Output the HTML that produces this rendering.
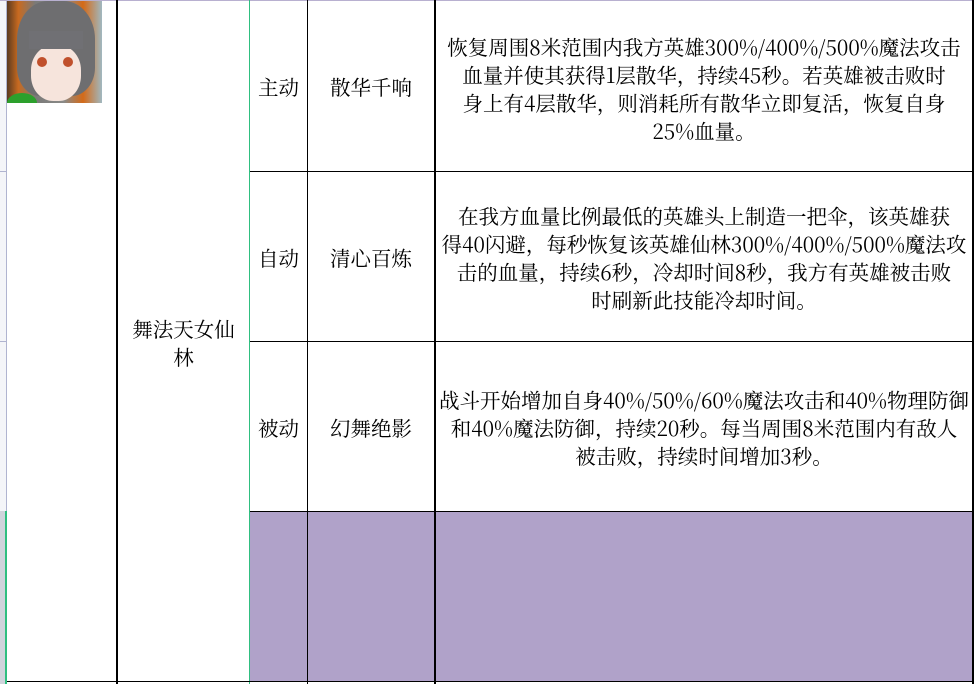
<!DOCTYPE html>
<html><head><meta charset="utf-8"><style>
html,body{margin:0;padding:0;width:974px;height:684px;overflow:hidden;background:#fff;font-family:"Noto Serif CJK SC","Liberation Serif",serif;color:#000;}
.a{position:absolute;}
.t{position:absolute;display:flex;align-items:center;justify-content:center;text-align:center;font-size:20.5px;line-height:28px;white-space:nowrap;}
</style></head><body>
<div class="a" style="left:0;top:0;width:6px;height:684px;background:#f4f5f8;"></div>
<div class="a" style="left:0;top:511px;width:6px;height:173px;background:#d0d4dc;"></div>
<div class="a" style="left:0;top:171px;width:6px;height:1px;background:#b0b4d0;"></div>
<div class="a" style="left:0;top:341px;width:6px;height:1px;background:#b0b4d0;"></div>
<div class="a" style="left:6px;top:0;width:1px;height:511px;background:#b0b4d0;"></div>
<div class="a" style="left:5px;top:511px;width:2px;height:173px;background:#2fbf80;"></div>
<div class="a" style="left:0;top:0;width:974px;height:1px;background:#b8b0d0;"></div>
<div class="a" style="left:7px;top:1px;width:95px;height:102px;background:linear-gradient(90deg,#5a3a20 0%,#c86a20 12%,#7a7a78 30%,#8a8a88 60%,#d46a18 80%,#a0b8c0 100%);overflow:hidden;">
<div class="a" style="left:10px;top:0px;width:78px;height:95px;border-radius:40% 40% 30% 30%;background:#6e6e70;"></div>
<div class="a" style="left:24px;top:44px;width:50px;height:56px;border-radius:45%;background:#f6e4dc;"></div>
<div class="a" style="left:22px;top:30px;width:54px;height:18px;background:#707074;"></div>
<div class="a" style="left:30px;top:56px;width:10px;height:10px;border-radius:50%;background:#c0502c;"></div>
<div class="a" style="left:56px;top:56px;width:10px;height:10px;border-radius:50%;background:#c0502c;"></div>
<div class="a" style="left:0;top:92px;width:30px;height:20px;border-radius:50%;background:#2ca02c;"></div>
</div>
<div class="a" style="left:116px;top:0;width:2px;height:684px;background:#000;"></div>
<div class="a" style="left:249px;top:0;width:1px;height:684px;background:#2fbf80;"></div>
<div class="a" style="left:250px;top:511px;width:724px;height:170px;background:#b0a2c9;"></div>
<div class="a" style="left:307px;top:0;width:1px;height:684px;background:#000;"></div>
<div class="a" style="left:434px;top:0;width:2px;height:684px;background:#000;"></div>
<div class="a" style="left:250px;top:171px;width:724px;height:1px;background:#000;"></div>
<div class="a" style="left:250px;top:341px;width:724px;height:1px;background:#000;"></div>
<div class="a" style="left:250px;top:511px;width:724px;height:1px;background:#000;"></div>
<div class="a" style="left:7px;top:681px;width:967px;height:1px;background:#000;"></div>
<div class="a" style="left:972px;top:0;width:2px;height:684px;background:#000;"></div>

<div class="t" style="left:118px;top:0;width:131px;height:684px;">舞法天女仙<br>林</div>
<div class="t" style="left:250px;top:0;width:57px;height:171px;">主动</div>
<div class="t" style="left:308px;top:0;width:126px;height:171px;">散华千响</div>
<div class="t" style="left:436px;top:2px;width:536px;height:171px;">恢复周围8米范围内我方英雄300%/400%/500%魔法攻击<br>血量并使其获得1层散华，持续45秒。若英雄被击败时<br>身上有4层散华，则消耗所有散华立即复活，恢复自身<br>25%血量。</div>
<div class="t" style="left:250px;top:172px;width:57px;height:169px;">自动</div>
<div class="t" style="left:308px;top:172px;width:126px;height:169px;">清心百炼</div>
<div class="t" style="left:436px;top:172px;width:536px;height:169px;">在我方血量比例最低的英雄头上制造一把伞，该英雄获<br>得40闪避，每秒恢复该英雄仙林300%/400%/500%魔法攻<br>击的血量，持续6秒，冷却时间8秒，我方有英雄被击败<br>时刷新此技能冷却时间。</div>
<div class="t" style="left:250px;top:342px;width:57px;height:169px;">被动</div>
<div class="t" style="left:308px;top:342px;width:126px;height:169px;">幻舞绝影</div>
<div class="t" style="left:436px;top:342px;width:536px;height:169px;">战斗开始增加自身40%/50%/60%魔法攻击和40%物理防御<br>和40%魔法防御，持续20秒。每当周围8米范围内有敌人<br>被击败，持续时间增加3秒。</div>
</body></html>
